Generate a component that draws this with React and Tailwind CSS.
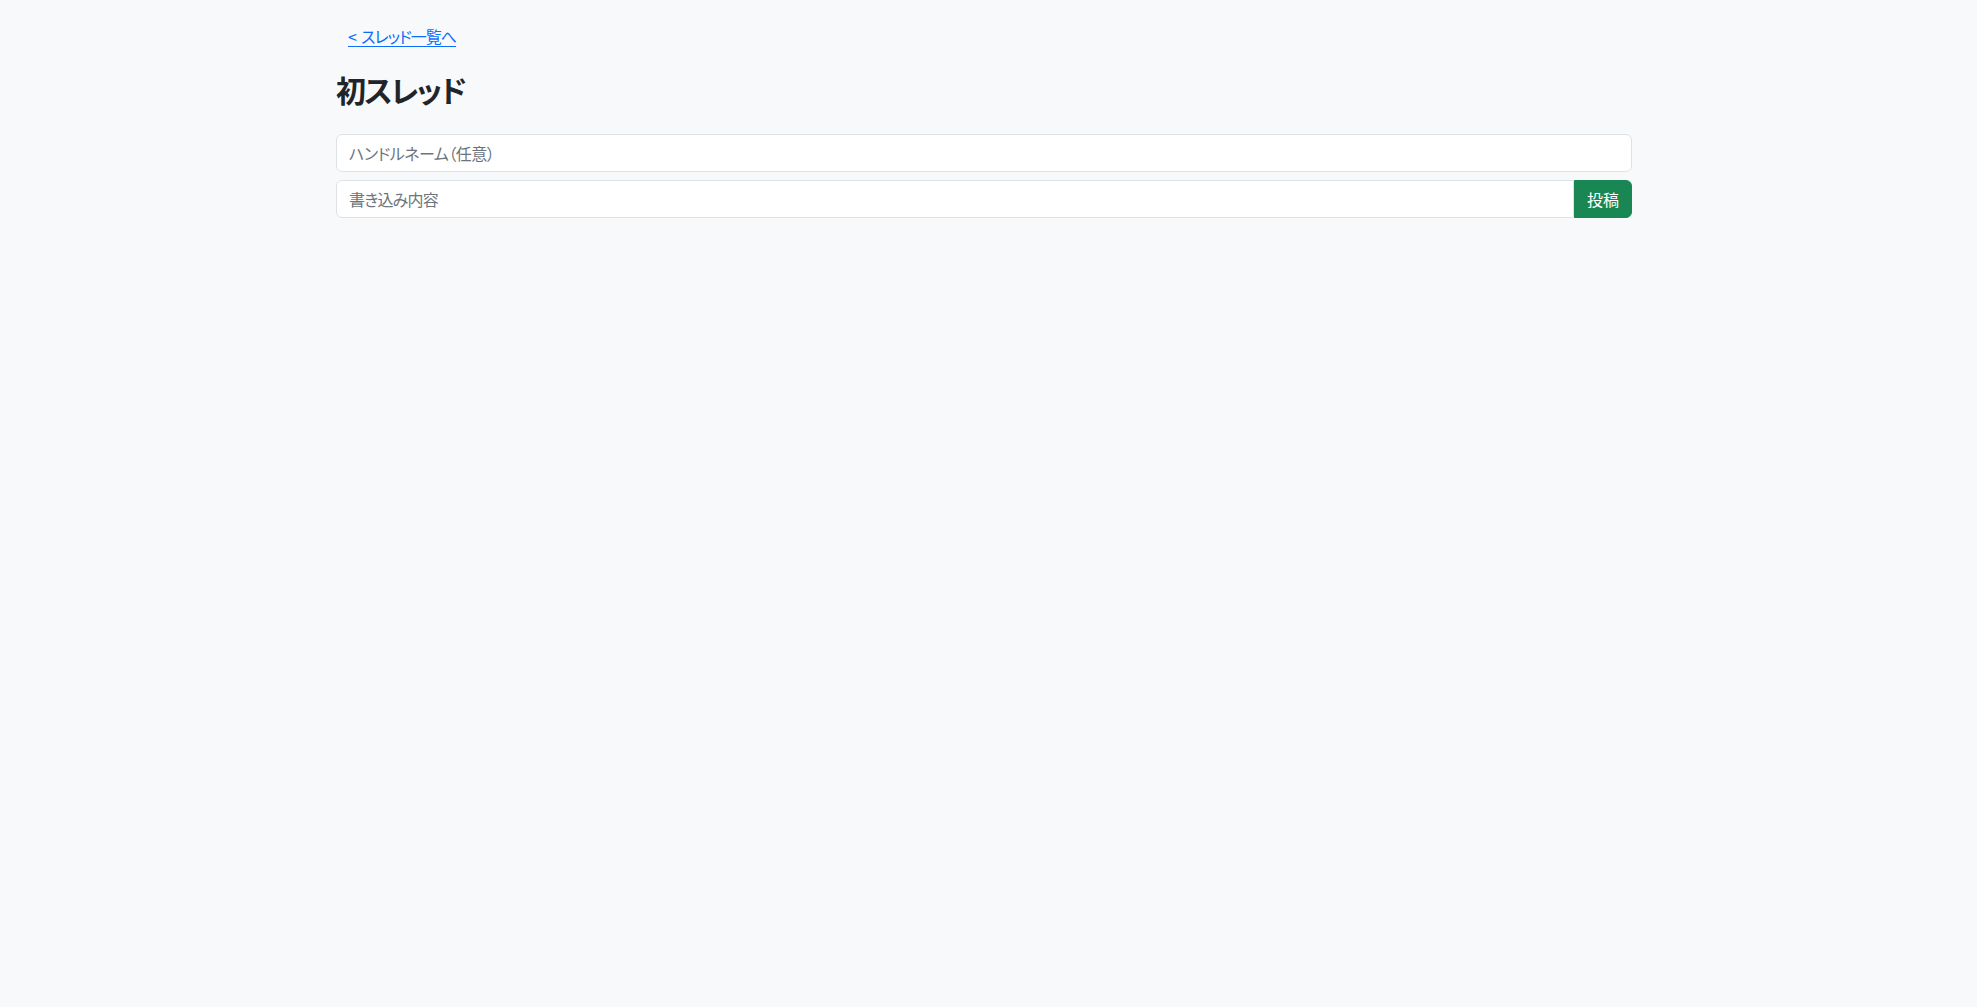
import React, { useState } from 'react'

// ─── Screen ──────────────────────────────────────────────────────────────────

const FONT = "font-['Noto_Sans_CJK_JP','Noto_Sans',sans-serif] [font-feature-settings:'palt']"

export default function App() {
  const [name, setName] = useState('')
  const [body, setBody] = useState('')

  return (
    <div className={`min-h-screen bg-[#f8f9fa] pr-[9px] text-[#212529] ${FONT}`}>
      <div className="mx-auto w-full max-w-[1320px] px-3 pt-[18px]">

        {/* ── Back link ─────────────────────────────────────────────────── */}
        <a
          href="#"
          className="inline-block px-3 py-1.5 text-base leading-6 tracking-[-1px] text-[#0d6efd] underline underline-offset-[3px]"
        >
          &lt;&nbsp;&nbsp;スレッド一覧へ
        </a>

        {/* ── Title ─────────────────────────────────────────────────────── */}
        <h2 className="mt-[17px] mb-[27px] text-[30px] leading-[1.2] font-bold tracking-[-0.06em]">初スレッド</h2>

        {/* ── Form ──────────────────────────────────────────────────────── */}
        <form onSubmit={e => e.preventDefault()}>
          <input
            value={name}
            onChange={e => setName(e.target.value)}
            placeholder="ハンドルネーム（任意）"
            className="mb-2 block h-[38px] w-full rounded-md border border-[#dee2e6] bg-white px-3 text-base tracking-[-0.5px] text-[#212529] outline-none placeholder:text-[#6c757d]"
          />
          <div className="flex h-[38px]">
            <input
              value={body}
              onChange={e => setBody(e.target.value)}
              placeholder="書き込み内容"
              className="min-w-0 flex-1 rounded-l-md border border-[#dee2e6] bg-white px-3 text-base tracking-[-0.8px] text-[#212529] outline-none placeholder:text-[#6c757d]"
            />
            <button
              type="submit"
              className="rounded-r-md border border-[#198754] bg-[#198754] px-3 text-base text-white"
            >
              投稿
            </button>
          </div>
        </form>

      </div>
    </div>
  )
}
